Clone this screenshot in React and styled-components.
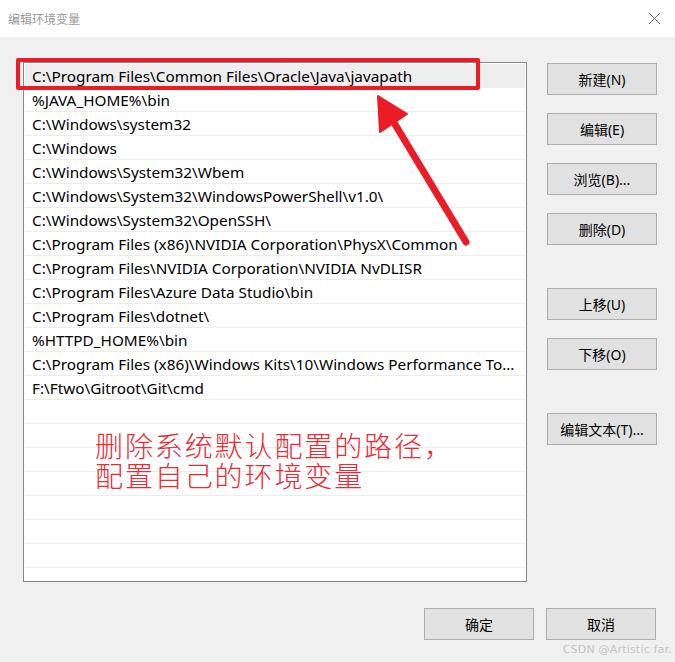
import React from "react";
import styled, { createGlobalStyle } from "styled-components";

const GlobalStyle = createGlobalStyle`
  html, body { margin: 0; padding: 0; background: #f0f0f0; }
  body { font-family: "Noto Sans", "Noto Sans CJK SC", sans-serif; }
  * { box-sizing: border-box; }
`;

const Window = styled.div`
  position: relative;
  width: 675px;
  height: 662px;
  display: flex;
  flex-direction: column;
  background: #f0f0f0;
  overflow: hidden;
`;

const TitleBar = styled.div`
  height: 37px;
  background: #ffffff;
  display: flex;
  align-items: center;
  justify-content: space-between;
  padding: 0 14px 0 8px;
`;

const Title = styled.span`
  font-family: "Noto Sans CJK SC", sans-serif;
  font-size: 12px;
  color: #9a9a9a;
`;

const Body = styled.div`
  position: relative;
  flex: 1;
  display: flex;
  flex-direction: column;
  padding: 25px 19px 0 23px;
`;

const Main = styled.div`
  display: flex;
  gap: 20px;
`;

const List = styled.div`
  width: 504px;
  height: 520px;
  border: 1px solid #828790;
  background: #ffffff;
  padding: 1px;
  display: flex;
  flex-direction: column;
`;

const Row = styled.div`
  height: 24px;
  flex: 0 0 24px;
  border-bottom: 1px solid #ececec;
  background: ${(p) => (p.$selected ? "#eeeeee" : "#ffffff")};
  padding-left: 7px;
  padding-right: 3px;
  display: flex;
  align-items: center;
  font-family: "Noto Sans", "Noto Sans CJK SC", sans-serif;
  font-size: 15.3px;
  color: #000;
  white-space: nowrap;
  overflow: hidden;
`;

const RowText = styled.span`
  min-width: 0;
  overflow: hidden;
  text-overflow: ellipsis;
  white-space: nowrap;
`;

const ButtonColumn = styled.div`
  display: flex;
  flex-direction: column;
  padding-top: 1px;
`;

const Button = styled.button`
  width: 110px;
  height: 32px;
  margin-top: ${(p) => p.$gap || 0}px;
  background: #e1e1e1;
  border: 1px solid #adadad;
  border-radius: 0;
  font-family: "Noto Sans", "Noto Sans CJK SC", sans-serif;
  font-size: 14px;
  color: #000;
  padding: 0;
  display: flex;
  align-items: center;
  justify-content: center;
`;

const Footer = styled.div`
  display: flex;
  justify-content: flex-end;
  gap: 12px;
  margin-top: 26px;
`;

const Highlight = styled.div`
  position: absolute;
  left: 16px;
  top: 21px;
  width: 464px;
  height: 32px;
  border: 4px solid #ec1c24;
  border-radius: 2px;
  pointer-events: none;
`;

const Overlay = styled.svg`
  position: absolute;
  left: 0;
  top: 0;
  pointer-events: none;
`;

const Annotation = styled.div`
  position: absolute;
  left: 95px;
  top: 393px;
  display: flex;
  flex-direction: column;
  font-family: "Noto Sans CJK SC", sans-serif;
  font-weight: 300;
  font-size: 28px;
  color: #ec2a34;
  letter-spacing: 1.9px;
`;

const AnnotationLine = styled.div`
  height: 30px;
  line-height: 30px;
  white-space: nowrap;
`;

const Watermark = styled.div`
  position: absolute;
  right: 3px;
  bottom: 6px;
  font-family: "DejaVu Sans", sans-serif;
  font-size: 11px;
  color: #c4c4c4;
  letter-spacing: 0.2px;
`;

const paths = [
  "C:\\Program Files\\Common Files\\Oracle\\Java\\javapath",
  "%JAVA_HOME%\\bin",
  "C:\\Windows\\system32",
  "C:\\Windows",
  "C:\\Windows\\System32\\Wbem",
  "C:\\Windows\\System32\\WindowsPowerShell\\v1.0\\",
  "C:\\Windows\\System32\\OpenSSH\\",
  "C:\\Program Files (x86)\\NVIDIA Corporation\\PhysX\\Common",
  "C:\\Program Files\\NVIDIA Corporation\\NVIDIA NvDLISR",
  "C:\\Program Files\\Azure Data Studio\\bin",
  "C:\\Program Files\\dotnet\\",
  "%HTTPD_HOME%\\bin",
  "C:\\Program Files (x86)\\Windows Kits\\10\\Windows Performance Toolkit\\",
  "F:\\Ftwo\\Gitroot\\Git\\cmd",
  "", "", "", "", "", "", "",
];

const buttons = [
  { label: "新建(N)", gap: 0 },
  { label: "编辑(E)", gap: 18 },
  { label: "浏览(B)...", gap: 18 },
  { label: "删除(D)", gap: 18 },
  { label: "上移(U)", gap: 43 },
  { label: "下移(O)", gap: 18 },
  { label: "编辑文本(T)...", gap: 43 },
];

export default function App() {
  return (
    <Window>
      <GlobalStyle />
      <TitleBar>
        <Title>编辑环境变量</Title>
        <svg width="13" height="13" viewBox="0 0 13 13">
          <path d="M1 1 L12 12 M12 1 L1 12" stroke="#6b6b6b" strokeWidth="1" fill="none" />
        </svg>
      </TitleBar>
      <Body>
        <Main>
          <List>
            {paths.map((p, i) => (
              <Row key={i} $selected={i === 0}>
                <RowText>{p}</RowText>
              </Row>
            ))}
          </List>
          <ButtonColumn>
            {buttons.map((b) => (
              <Button key={b.label} $gap={b.gap}>{b.label}</Button>
            ))}
          </ButtonColumn>
        </Main>
        <Footer>
          <Button>确定</Button>
          <Button>取消</Button>
        </Footer>
        <Highlight />
        <Annotation>
          <AnnotationLine>删除系统默认配置的路径，</AnnotationLine>
          <AnnotationLine>配置自己的环境变量</AnnotationLine>
        </Annotation>
      </Body>
      <Overlay width="675" height="662" viewBox="0 0 675 662">
        <line x1="466" y1="242" x2="390" y2="116" stroke="#ec1c24" strokeWidth="7" strokeLinecap="round" />
        <polygon points="378,96 380,132 407,114" fill="#ec1c24" stroke="#ec1c24" strokeWidth="2" strokeLinejoin="round" />
      </Overlay>
      <Watermark>CSDN @Artistic far.</Watermark>
    </Window>
  );
}
